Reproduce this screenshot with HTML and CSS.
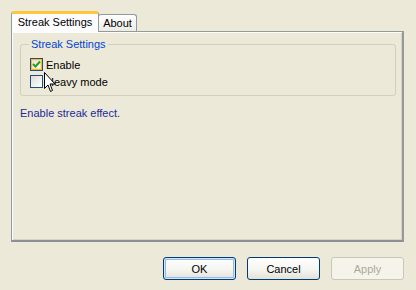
FILE: index.html
```html
<!DOCTYPE html>
<html>
<head>
<meta charset="utf-8">
<link rel="stylesheet" href="styles.css">
</head>
<body>
<div class="dialog">
  <div class="tabs">
    <div class="tab active">Streak Settings</div>
    <div class="tab">About</div>
  </div>
  <div class="panel">
    <fieldset class="group">
      <legend>Streak Settings</legend>
      <label class="check"><span class="box checked hover"><svg width="9" height="9" viewBox="0 0 9 9"><path d="M1 4 L3.5 6.5 L8 1.5" fill="none" stroke="#21a121" stroke-width="2"/></svg></span>Enable</label>
      <label class="check"><span class="box"></span>Heavy mode</label>
    </fieldset>
    <p class="desc">Enable streak effect.</p>
  </div>
  <div class="buttons">
    <button class="btn default">OK</button>
    <button class="btn">Cancel</button>
    <button class="btn disabled">Apply</button>
  </div>
  <svg class="cursor" width="12" height="21" viewBox="0 0 12 21"><path d="M0.5 0.5 L0.5 16.5 L4 13 L6.5 19.5 L8.5 18.5 L6 12 L11 12 Z" fill="#fff" stroke="#000" stroke-width="1"/></svg>
</div>
</body>
</html>
```
FILE: styles.css
```css
html, body {
  margin: 0;
  padding: 0;
  background: #ece9d8;
}
body {
  font-family: "Liberation Sans", Arial, sans-serif;
  font-size: 11px;
  color: #000;
}
.dialog {
  position: relative;
  width: 416px;
  height: 290px;
  padding: 11px 12px 0 11px;
  box-sizing: border-box;
}
.tabs {
  display: flex;
  align-items: flex-end;
  height: 20px;
  position: relative;
  z-index: 2;
}
.tab {
  box-sizing: border-box;
  height: 17px;
  padding: 0 4px;
  border: 1px solid #919b9c;
  border-bottom: none;
  border-radius: 3px 3px 0 0;
  background: linear-gradient(#ffffff, #ecebe6);
  line-height: 16px;
  white-space: nowrap;
}
.tab.active {
  height: 21px;
  margin-bottom: -1px;
  width: 88px;
  text-align: center;
  border-top: 3px solid #ffc83c;
  background: #fcfcfe;
  line-height: 15px;
  padding-top: 1px;
  z-index: 3;
  position: relative;
}
.tab.active + .tab {
  margin-left: -1px;
  width: 39px;
  text-align: center;
}
.panel {
  box-sizing: border-box;
  height: 211px;
  border: 1px solid #919b9c;
  border-right: 2px solid #919b9c;
  border-bottom: 2px solid #8a9293;
  box-shadow: inset 1px 1px 0 #fcfcfe, inset -1px -1px 0 #d5d2c3;
  background: #ece9d8;
  padding: 6px 6px 0 8px;
}
.group {
  margin: 0;
  padding: 6px 8px 5px 9px;
  border: 1px solid #d0d0bf;
  border-radius: 3px;
  box-sizing: border-box;
}
.group legend {
  color: #0046d5;
  padding: 0 2px;
  margin-left: -1px;
  line-height: 12px;
  white-space: nowrap;
}
.check {
  display: flex;
  align-items: center;
  height: 17px;
  gap: 3px;
  white-space: nowrap;
}
.box {
  box-sizing: border-box;
  width: 13px;
  height: 13px;
  border: 1px solid #1c5180;
  background: linear-gradient(135deg, #dcdcd7, #ffffff);
  display: flex;
  align-items: center;
  justify-content: center;
}
.box.hover {
  box-shadow: inset 0 0 0 1px #f8b636, inset 0 0 0 2px #fedf9c;
}
.desc {
  margin: 11px 0 0 0;
  color: #1c2b9c;
  white-space: nowrap;
}
.buttons {
  display: flex;
  justify-content: flex-end;
  gap: 11px;
  margin-top: 15px;
}
.btn {
  box-sizing: border-box;
  width: 73px;
  height: 23px;
  border: 1px solid #003c74;
  border-radius: 3px;
  background: linear-gradient(#ffffff, #f4f4f0 60%, #e3e1d6);
  font-family: inherit;
  font-size: 11px;
  color: #000;
  padding: 0;
}
.btn.default {
  box-shadow: inset 0 0 0 1px #cee7ff, inset 0 0 0 2px #98b8ea;
}
.btn.disabled {
  border-color: #c9c7ba;
  background: #f5f4ea;
  color: #aca899;
}
.cursor {
  position: absolute;
  left: 44px;
  top: 72px;
}
```
